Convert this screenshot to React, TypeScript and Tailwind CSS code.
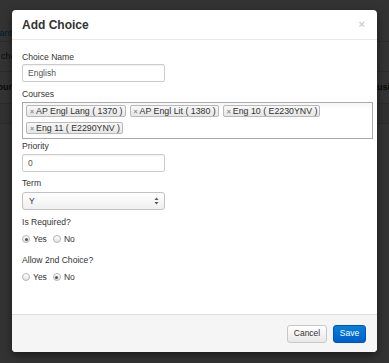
import React from "react";

const F = "[font-family:'Liberation_Sans',Arial,sans-serif]";

function Radio({ checked }: { checked?: boolean }) {
  return (
    <span className="w-[8px] h-[8px] rounded-full border border-[#b5b5b5] bg-gradient-to-b from-white to-[#e2e2e2] flex items-center justify-center shrink-0">
      {checked && <span className="w-[3px] h-[3px] rounded-full bg-[#555]" />}
    </span>
  );
}

function RadioRow({ yes }: { yes: boolean }) {
  return (
    <div className="mt-[5px] h-[12px] flex items-center text-[8.5px] text-[#333]">
      <Radio checked={yes} />
      <span className="ml-[3px]">Yes</span>
      <span className="ml-[6px]">
        <Radio checked={!yes} />
      </span>
      <span className="ml-[3px]">No</span>
    </div>
  );
}

function Tag({ label }: { label: string }) {
  return (
    <span className="h-[12px] flex items-center border border-[#b8b8b8] rounded-[2px] bg-gradient-to-b from-[#f8f8f8] to-[#e6e6e6] pl-[3px] pr-[2px] text-[8.8px] leading-none text-[#333] whitespace-nowrap">
      <span className="text-[7px] text-[#888] font-bold mr-[2px]">×</span>
      {label}
    </span>
  );
}

function Label({ children, className = "" }: { children: React.ReactNode; className?: string }) {
  return <div className={`h-[12px] leading-[12px] text-[8.6px] text-[#333] ${className}`}>{children}</div>;
}

function Input({ value, className = "" }: { value: string; className?: string }) {
  return (
    <div className={`w-[143px] h-[18px] border border-[#cccccc] rounded-[2px] flex items-center pl-[5px] text-[8.5px] text-[#555] shadow-[inset_0_1px_1px_rgba(0,0,0,0.06)] ${className}`}>
      {value}
    </div>
  );
}

export default function App() {
  return (
    <div className={`relative w-[389px] h-[363px] overflow-hidden bg-white ${F}`}>
      {/* page behind */}
      <div className="pt-[26px] text-[9px]">
        <div className="grid grid-cols-[12px_1fr_12px] h-[16px] items-center border-b border-[#ddd]">
          <div className="flex justify-end overflow-hidden whitespace-nowrap text-[#0088cc]">ant</div>
          <div />
          <div />
        </div>
        <div className="grid grid-cols-[12px_1fr_12px] h-[30px] items-center border-b border-[#ddd]">
          <div className="flex justify-start overflow-hidden whitespace-nowrap text-[#333] pl-[1px]">cho</div>
          <div />
          <div />
        </div>
        <div className="grid grid-cols-[12px_1fr_12px] h-[32px] items-center border-b border-[#ddd] font-bold text-[#333]">
          <div className="flex justify-end overflow-hidden whitespace-nowrap">our</div>
          <div />
          <div className="flex justify-start overflow-hidden whitespace-nowrap">usi</div>
        </div>
        <div className="h-[20px] bg-[#f3f3f3] border-b border-[#ddd]" />
      </div>

      {/* backdrop */}
      <div className="absolute inset-0 bg-black/80" />

      {/* modal */}
      <div className="absolute left-[12px] top-[10px] w-[365px] h-[342px] bg-white rounded-[4px] shadow-[0_3px_8px_rgba(0,0,0,0.5)] flex flex-col overflow-hidden">
        <div className="h-[30px] shrink-0 border-b border-[#e8e8e8] flex items-center justify-between pl-[10px] pr-[12px]">
          <span className="text-[12px] font-bold text-[#333]">Add Choice</span>
          <span className="text-[11px] font-bold text-[#cfcfcf] leading-none">×</span>
        </div>

        <div className="flex-1 pl-[10px] pt-[11px]">
          <Label>Choice Name</Label>
          <Input value="English" className="mt-[1px]" />

          <Label className="mt-[6px]">Courses</Label>
          <div className="mt-[2px] w-[351px] h-[37px] border border-[#aaaaaa] bg-gradient-to-b from-[#f6f6f6] to-white to-[20%] pl-[3px] pt-[2px]">
            <div className="flex flex-wrap gap-x-[4px] gap-y-[5px]">
              <Tag label="AP Engl Lang ( 1370 )" />
              <Tag label="AP Engl Lit ( 1380 )" />
              <Tag label="Eng 10 ( E2230YNV )" />
              <Tag label="Eng 11 ( E2290YNV )" />
            </div>
          </div>

          <Label className="mt-[1px]">Priority</Label>
          <Input value="0" className="mt-[2px]" />

          <Label className="mt-[5px]">Term</Label>
          <div className="mt-[3px] w-[143px] h-[18px] border border-[#c2c2c2] rounded-[3px] bg-gradient-to-b from-white to-[#efefef] flex items-center justify-between pl-[6px] pr-[5px] text-[8.5px] text-[#333]">
            <span>Y</span>
            <svg width="5" height="8" viewBox="0 0 5 8">
              <path d="M2.5 0.5 L4.5 3 L0.5 3 Z" fill="#555" />
              <path d="M2.5 7.5 L4.5 5 L0.5 5 Z" fill="#555" />
            </svg>
          </div>

          <Label className="mt-[6px]">Is Required?</Label>
          <RadioRow yes={true} />

          <Label className="mt-[9px]">Allow 2nd Choice?</Label>
          <RadioRow yes={false} />
        </div>

        <div className="h-[38px] shrink-0 border-t border-[#dddddd] bg-[#f5f5f5] flex items-center justify-end gap-[6px] pr-[11px]">
          <button className="w-[40px] h-[18px] border border-[#c8c8c8] rounded-[3px] bg-gradient-to-b from-white to-[#e8e8e8] text-[8.5px] text-[#333] flex items-center justify-center">
            Cancel
          </button>
          <button className="w-[33px] h-[18px] border border-[#0056b8] rounded-[3px] bg-gradient-to-b from-[#0a80da] to-[#005ec8] text-[8.5px] text-white flex items-center justify-center">
            Save
          </button>
        </div>
      </div>
    </div>
  );
}
